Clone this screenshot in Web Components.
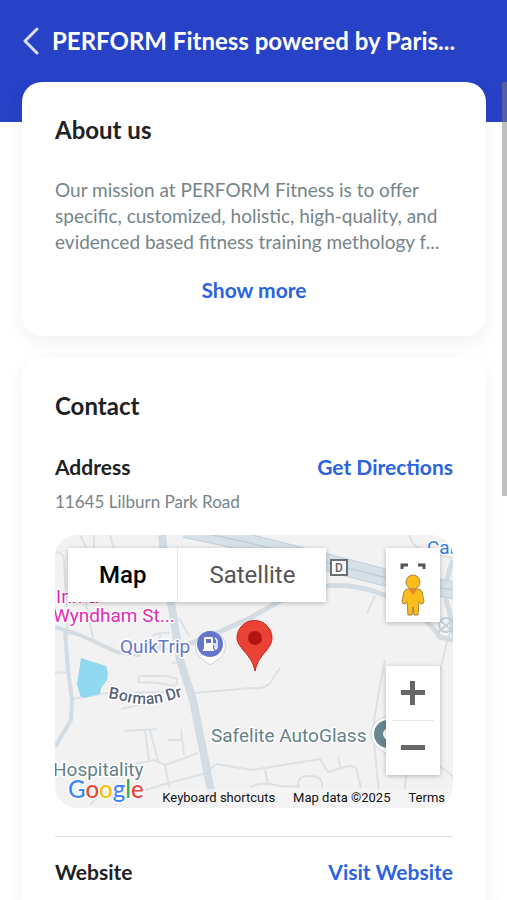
<!DOCTYPE html>
<html lang="en">
<head>
<meta charset="utf-8">
<meta name="viewport" content="width=device-width, initial-scale=1">
<title>PERFORM Fitness</title>
<style>
  html, body { margin: 0; height: 100%; }
  body {
    font-family: Lato, "Open Sans", sans-serif;
    color: #202124;
    background: #fff;
  }
</style>
</head>
<body>

<gym-page>
  <gym-header slot="header">PERFORM Fitness powered by Paris...</gym-header>

  <info-card heading="About us">
    <expandable-text>Our mission at PERFORM Fitness is to offer specific, customized, holistic, high-quality, and evidenced based fitness training methology f...</expandable-text>
  </info-card>

  <info-card heading="Contact">
    <contact-row label="Address" action="Get Directions" href="#directions">
      <span>11645 Lilburn Park Road</span>
      <location-map slot="media"></location-map>
    </contact-row>
    <contact-row label="Website" action="Visit Website" href="#website"></contact-row>
  </info-card>
</gym-page>

<script>
(function () {
  'use strict';

  function template(html) {
    const t = document.createElement('template');
    t.innerHTML = html;
    return t;
  }

  class BaseElement extends HTMLElement {
    constructor() {
      super();
      this._root = this.attachShadow({ mode: 'open' });
      this._root.appendChild(this.constructor.template.content.cloneNode(true));
    }
  }

  // ── Page shell ───────────────────────────────────────────────
  class GymPage extends BaseElement {
    static template = template(`
      <style>
        :host {
          display: flex;
          flex-direction: column;
          position: relative;
          height: 100vh;
          overflow: hidden;
          background: linear-gradient(#2741c7 122px, #fff 122px);
        }
        main {
          flex: 1;
          min-height: 0;
          overflow-y: auto;
          scrollbar-width: none;
          padding: 0 21px 22px 22px;
        }
        .cards {
          display: grid;
          gap: 22px;
        }
        /* Overlay scroll thumb */
        .thumb {
          position: absolute;
          top: 82px;
          right: 0;
          width: 5px;
          height: 46%;
          background: rgba(128, 128, 128, 0.5);
          pointer-events: none;
        }
      </style>
      <slot name="header"></slot>
      <main><div class="cards"><slot></slot></div></main>
      <div class="thumb" aria-hidden="true"></div>
    `);
  }

  class GymHeader extends BaseElement {
    static template = template(`
      <style>
        :host {
          display: flex;
          align-items: center;
          gap: 12px;
          box-sizing: border-box;
          height: 82px;
          padding: 0 22px;
          color: #fff;
        }
        button {
          display: flex;
          padding: 0;
          border: 0;
          background: none;
          color: #d9def8;
          cursor: pointer;
        }
        h1 {
          margin: 0;
          min-width: 0;
          font-size: 24px;
          line-height: 30px;
          font-weight: 700;
          white-space: nowrap;
          overflow: hidden;
          text-overflow: ellipsis;
        }
      </style>
      <button type="button" aria-label="Back">
        <svg width="18" height="28" viewBox="0 0 18 28" fill="none" stroke="currentColor" stroke-width="3" stroke-linecap="round" stroke-linejoin="round">
          <path d="M15 2 3 14 15 26"/>
        </svg>
      </button>
      <h1><slot></slot></h1>
    `);
  }

  // ── Cards ────────────────────────────────────────────────────
  class InfoCard extends BaseElement {
    static template = template(`
      <style>
        :host {
          display: block;
          min-width: 0;
          padding: 33px;
          border-radius: 20px;
          background: #fff;
          box-shadow: 0 6px 20px rgba(20, 24, 40, 0.06);
        }
        h2 {
          margin: 0 0 32px;
          font-size: 24px;
          line-height: 30px;
          font-weight: 700;
        }
      </style>
      <h2></h2>
      <slot></slot>
    `);

    connectedCallback() {
      this._root.querySelector('h2').textContent = this.getAttribute('heading');
    }
  }

  class ExpandableText extends BaseElement {
    static template = template(`
      <style>
        :host { display: grid; gap: 22px; }
        p {
          margin: 0;
          font-size: 19px;
          line-height: 26px;
          color: #75848a;
        }
        button {
          justify-self: center;
          padding: 0;
          border: 0;
          background: none;
          font: 700 21px/26px Lato, "Open Sans", sans-serif;
          color: #2a63e0;
          cursor: pointer;
        }
      </style>
      <p><slot></slot></p>
      <button type="button">Show more</button>
    `);
  }

  class ContactRow extends BaseElement {
    static template = template(`
      <style>
        :host { display: block; }
        :host(:not(:first-of-type)) {
          margin-top: 28px;
          padding-top: 21px;
          border-top: 1px solid #dcdedf;
        }
        .head {
          display: flex;
          justify-content: space-between;
          align-items: center;
          gap: 16px;
          font-size: 21px;
          line-height: 28px;
          font-weight: 700;
        }
        h3 { margin: 0; font: inherit; }
        a { color: #2a63e0; text-decoration: none; }
        .detail {
          margin-top: 8px;
          font-size: 17px;
          line-height: 26px;
          color: #75848a;
        }
        slot[name="media"] { display: block; margin-top: 20px; }
        :host(:empty) .detail,
        :host(:empty) slot[name="media"] { display: none; }
      </style>
      <div class="head"><h3></h3><a></a></div>
      <div class="detail"><slot></slot></div>
      <slot name="media"></slot>
    `);

    connectedCallback() {
      const link = this._root.querySelector('a');
      this._root.querySelector('h3').textContent = this.getAttribute('label');
      link.textContent = this.getAttribute('action');
      link.href = this.getAttribute('href');
    }
  }

  // ── Map ──────────────────────────────────────────────────────
  class LocationMap extends BaseElement {
    static template = template(`
      <style>
        :host {
          display: block;
          position: relative;
          aspect-ratio: 398 / 273;
          border-radius: 22px;
          overflow: hidden;
          background: #f3f2f3;
          font-family: Roboto, Arial, sans-serif;
        }
        .tiles { display: block; width: 100%; height: 100%; }
        .tiles text {
          paint-order: stroke;
          stroke: #fff;
          stroke-width: 3px;
          stroke-linejoin: round;
        }
        button {
          display: flex;
          align-items: center;
          justify-content: center;
          padding: 0;
          border: 0;
          background: #fff;
          font-family: inherit;
          color: #555;
          cursor: pointer;
        }
        .panel {
          position: absolute;
          background: #fff;
          border-radius: 2px;
          box-shadow: 0 1px 5px rgba(0, 0, 0, 0.25);
        }
        .types { top: 13px; left: 13px; display: flex; }
        .types button { height: 54px; padding: 0 31px; font-size: 24px; }
        .types button[aria-pressed="true"] { font-weight: 500; color: #000; }
        .types button + button { border-left: 1px solid #e8e8e8; }
        .view { top: 13px; right: 13px; width: 54px; }
        .view button { width: 100%; }
        .full { height: 26px; align-items: flex-end; }
        .pegman { height: 48px; align-items: flex-start; }
        .zoom { right: 13px; bottom: 33px; width: 54px; }
        .zoom button { width: 100%; height: 54px; }
        .zoom hr { margin: 0 6px; border: 0; border-top: 1px solid #e6e6e6; }
        .legal {
          position: absolute;
          right: 0;
          bottom: 0;
          display: flex;
          gap: 18px;
          padding: 0 8px 1px 3px;
          background: rgba(245, 245, 245, 0.7);
          font-size: 13px;
          line-height: 18px;
          color: #111;
          white-space: nowrap;
        }
        .legal button { background: none; font-size: inherit; line-height: inherit; color: inherit; }
        .legal a { color: inherit; text-decoration: none; }
      </style>

      <svg class="tiles" viewBox="55 535 398 273" preserveAspectRatio="xMidYMid slice">
        <!-- Minor streets -->
        <g fill="none" stroke="#dce1e5" stroke-width="2">
          <path d="M55 552q8 0 9 8l4 75M80 535l14 28M94 535q0 60-8 70l7 33M110 535q4 20 16 30"/>
          <path d="M55 673l13-1M72 699l35-6 73-1M194 693l56-5q14 2 20-5l10-15"/>
          <path d="M140 676h16M139 676l-1 6q18 0 32 3 8 2 7-6-10-4-22-3M121 709l26-6-5 3"/>
          <path d="M124 731l33-2M145 730l4 31M150 730l8 31M135 764l19-4 11 5 33-12M181 729l3 26M168 740h15M165 765l4 22M145 790l20-6 38-10 14-10 35 6 68-11 8 13 20-6q10 0 9 6l4 16"/>
          <path d="M265 770l3 15M250 787q10-5 25-2t25 0M298 788q-2-12 12-12t12 12M338 757l3 12M90 805l12-13M115 805l6-6"/>
          <path d="M385 660q-10 50-12 70l6 64M404 794l4-30h28q16 10 20 16M386 596l-5 0M375 596l-8 17M440 671l8-33 10-22M409 535q5 15 20 17l24 6"/>
          <path d="M179 618l10 18M152 636q8-4 18-3M155 646q10 7 20 0M160 635v16M178 650q7 8 5 15M172 664q5-5 10 4"/>
        </g>
        <!-- Arterials -->
        <g fill="none" stroke="#d3dce2" stroke-width="6">
          <path d="M162 535l3 30 8 50 7 45 13 40 10 50 11 58" stroke-width="8"/>
          <path d="M55 627l25 8 37 17 23 3" stroke-width="4"/>
          <path d="M65 632l3 38 4 29-1 21-16 27" stroke-width="4"/>
          <path d="M178 648l37-14 35-16 30-17 40-14q30-6 70 10 30 12 50 40l20 5" stroke-width="5"/>
          <path d="M453 560q-12 30-4 50l6 30" stroke-width="5"/>
        </g>
        <path d="M185 529l65 14 67 17 66 17 75 14" fill="none" stroke="#c3d0d9" stroke-width="18"/>
        <path d="M185 529l65 14 67 17 66 17 75 14" fill="none" stroke="#d5e0e7" stroke-width="16"/>
        <path d="M185 529l65 14 67 17 66 17 75 14" fill="none" stroke="#b8c7d0" stroke-width="1"/>
        <g fill="none" stroke="#c3d0d9" stroke-width="2">
          <circle cx="446" cy="625" r="7"/><path d="M436 617l20 17M437 633l17-14"/>
        </g>
        <!-- Pond -->
        <path d="M81 658l25 8q3 6 1 14l-6 8-1 6-9 2q-9 4-11-1l-3-11z" fill="#90d9f0"/>

        <!-- Highway shield -->
        <rect x="331" y="560" width="16" height="15" fill="#fff" stroke="#6b6f73" stroke-width="2"/>
        <text x="339" y="572" font-size="12" font-weight="500" text-anchor="middle" fill="#5c6064" style="stroke: none">D</text>

        <!-- Place labels -->
        <g font-size="19">
          <text x="56" y="603" fill="#e22bb5">Inn &amp;</text>
          <text x="53" y="622" fill="#e22bb5">Wyndham St...</text>
          <text x="120" y="653" fill="#6475c9">QuikTrip</text>
          <text x="211" y="742" fill="#658087">Safelite AutoGlass</text>
          <text x="53" y="776" fill="#658087">Hospitality</text>
          <text x="427" y="554" fill="#2f7de1">Car</text>
        </g>
        <path id="borman" d="M108 698C125 700 132 705 148 704S170 700 184 696" fill="none"/>
        <text font-size="16" font-weight="500" fill="#566279"><textPath href="#borman">Borman Dr</textPath></text>

        <!-- Gas station pin -->
        <path d="M210 665l-9-7a15 15 0 1 1 19 0z" fill="#fff" stroke="#ccd0dd"/>
        <circle cx="210" cy="644" r="13" fill="#6575cc"/>
        <path d="M204 638q0-1 1-1h7q1 0 1 1v11h1v2h-11v-2h1zM206 639v4h5v-4z" fill="#fff" fill-rule="evenodd"/>
        <path d="M213 644h2v4q1 2 2 0v-8l-2-2" fill="none" stroke="#fff" stroke-width="1.500"/>
        <!-- Auto glass pin -->
        <path d="M388 755l-11-8a17 17 0 1 1 22 0z" fill="#fff" stroke="#ccd5d8"/>
        <circle cx="388" cy="734" r="14" fill="#688891"/>
        <circle cx="389" cy="734" r="6" fill="#fff"/>
        <!-- Location marker -->
        <path d="M255 671c-2-9-5-13-11-20-4-5-7-9-7-13a17 17 0 0 1 35 0c0 4-2 8-6 13-6 7-9 11-11 20z" fill="#ea4335" stroke="#c5221f" stroke-width="1"/>
        <circle cx="255" cy="638" r="7" fill="#b31412"/>

        <text x="68" y="798" font-size="24" font-weight="500" style="font-family: Lato, sans-serif" aria-label="Google"><tspan fill="#4285f4">G</tspan><tspan fill="#ea4335">o</tspan><tspan fill="#fbbc04">o</tspan><tspan fill="#4285f4">g</tspan><tspan fill="#34a853">l</tspan><tspan fill="#ea4335">e</tspan></text>
      </svg>

      <div class="panel types">
        <button type="button" aria-pressed="true">Map</button>
        <button type="button" aria-pressed="false">Satellite</button>
      </div>

      <div class="panel view">
        <button class="full" type="button" aria-label="Toggle fullscreen view">
          <svg width="26" height="11" viewBox="0 0 26 11" fill="none" stroke="#555" stroke-width="3"><path d="M2 6V2h6M18 2h6v4"/></svg>
        </button>
        <button class="pegman" type="button" aria-label="Street View">
          <svg width="26" height="42" viewBox="0 2 26 42">
            <g fill="#fbbc1c" stroke="#a8843c" stroke-width="1" stroke-linejoin="round">
              <path d="M8 17q-3 0-4 3L2 29q0 3 3 3l2-2 1 13h4l1-8 1 8h4l1-13 2 2q3 0 3-3l-2-9q-1-3-4-3z"/>
              <circle cx="13" cy="10" r="7"/>
            </g>
            <path d="M8 16q5 3 10 0l-5 7z" fill="#e5872a"/>
          </svg>
        </button>
      </div>

      <div class="panel zoom">
        <button type="button" aria-label="Zoom in">
          <svg width="26" height="26" viewBox="0 0 26 26" fill="#666"><path d="M10 1h5v9h10v5H15v10h-5V15H1v-5h9z"/></svg>
        </button>
        <hr>
        <button type="button" aria-label="Zoom out">
          <svg width="26" height="26" viewBox="0 0 26 26" fill="#666"><path d="M1 10h24v5H1z"/></svg>
        </button>
      </div>

      <div class="legal">
        <button type="button">Keyboard shortcuts</button>
        <span>Map data ©2025</span>
        <a href="#terms">Terms</a>
      </div>
    `);
  }

  customElements.define('gym-page', GymPage);
  customElements.define('gym-header', GymHeader);
  customElements.define('info-card', InfoCard);
  customElements.define('expandable-text', ExpandableText);
  customElements.define('contact-row', ContactRow);
  customElements.define('location-map', LocationMap);
})();
</script>
</body>
</html>
